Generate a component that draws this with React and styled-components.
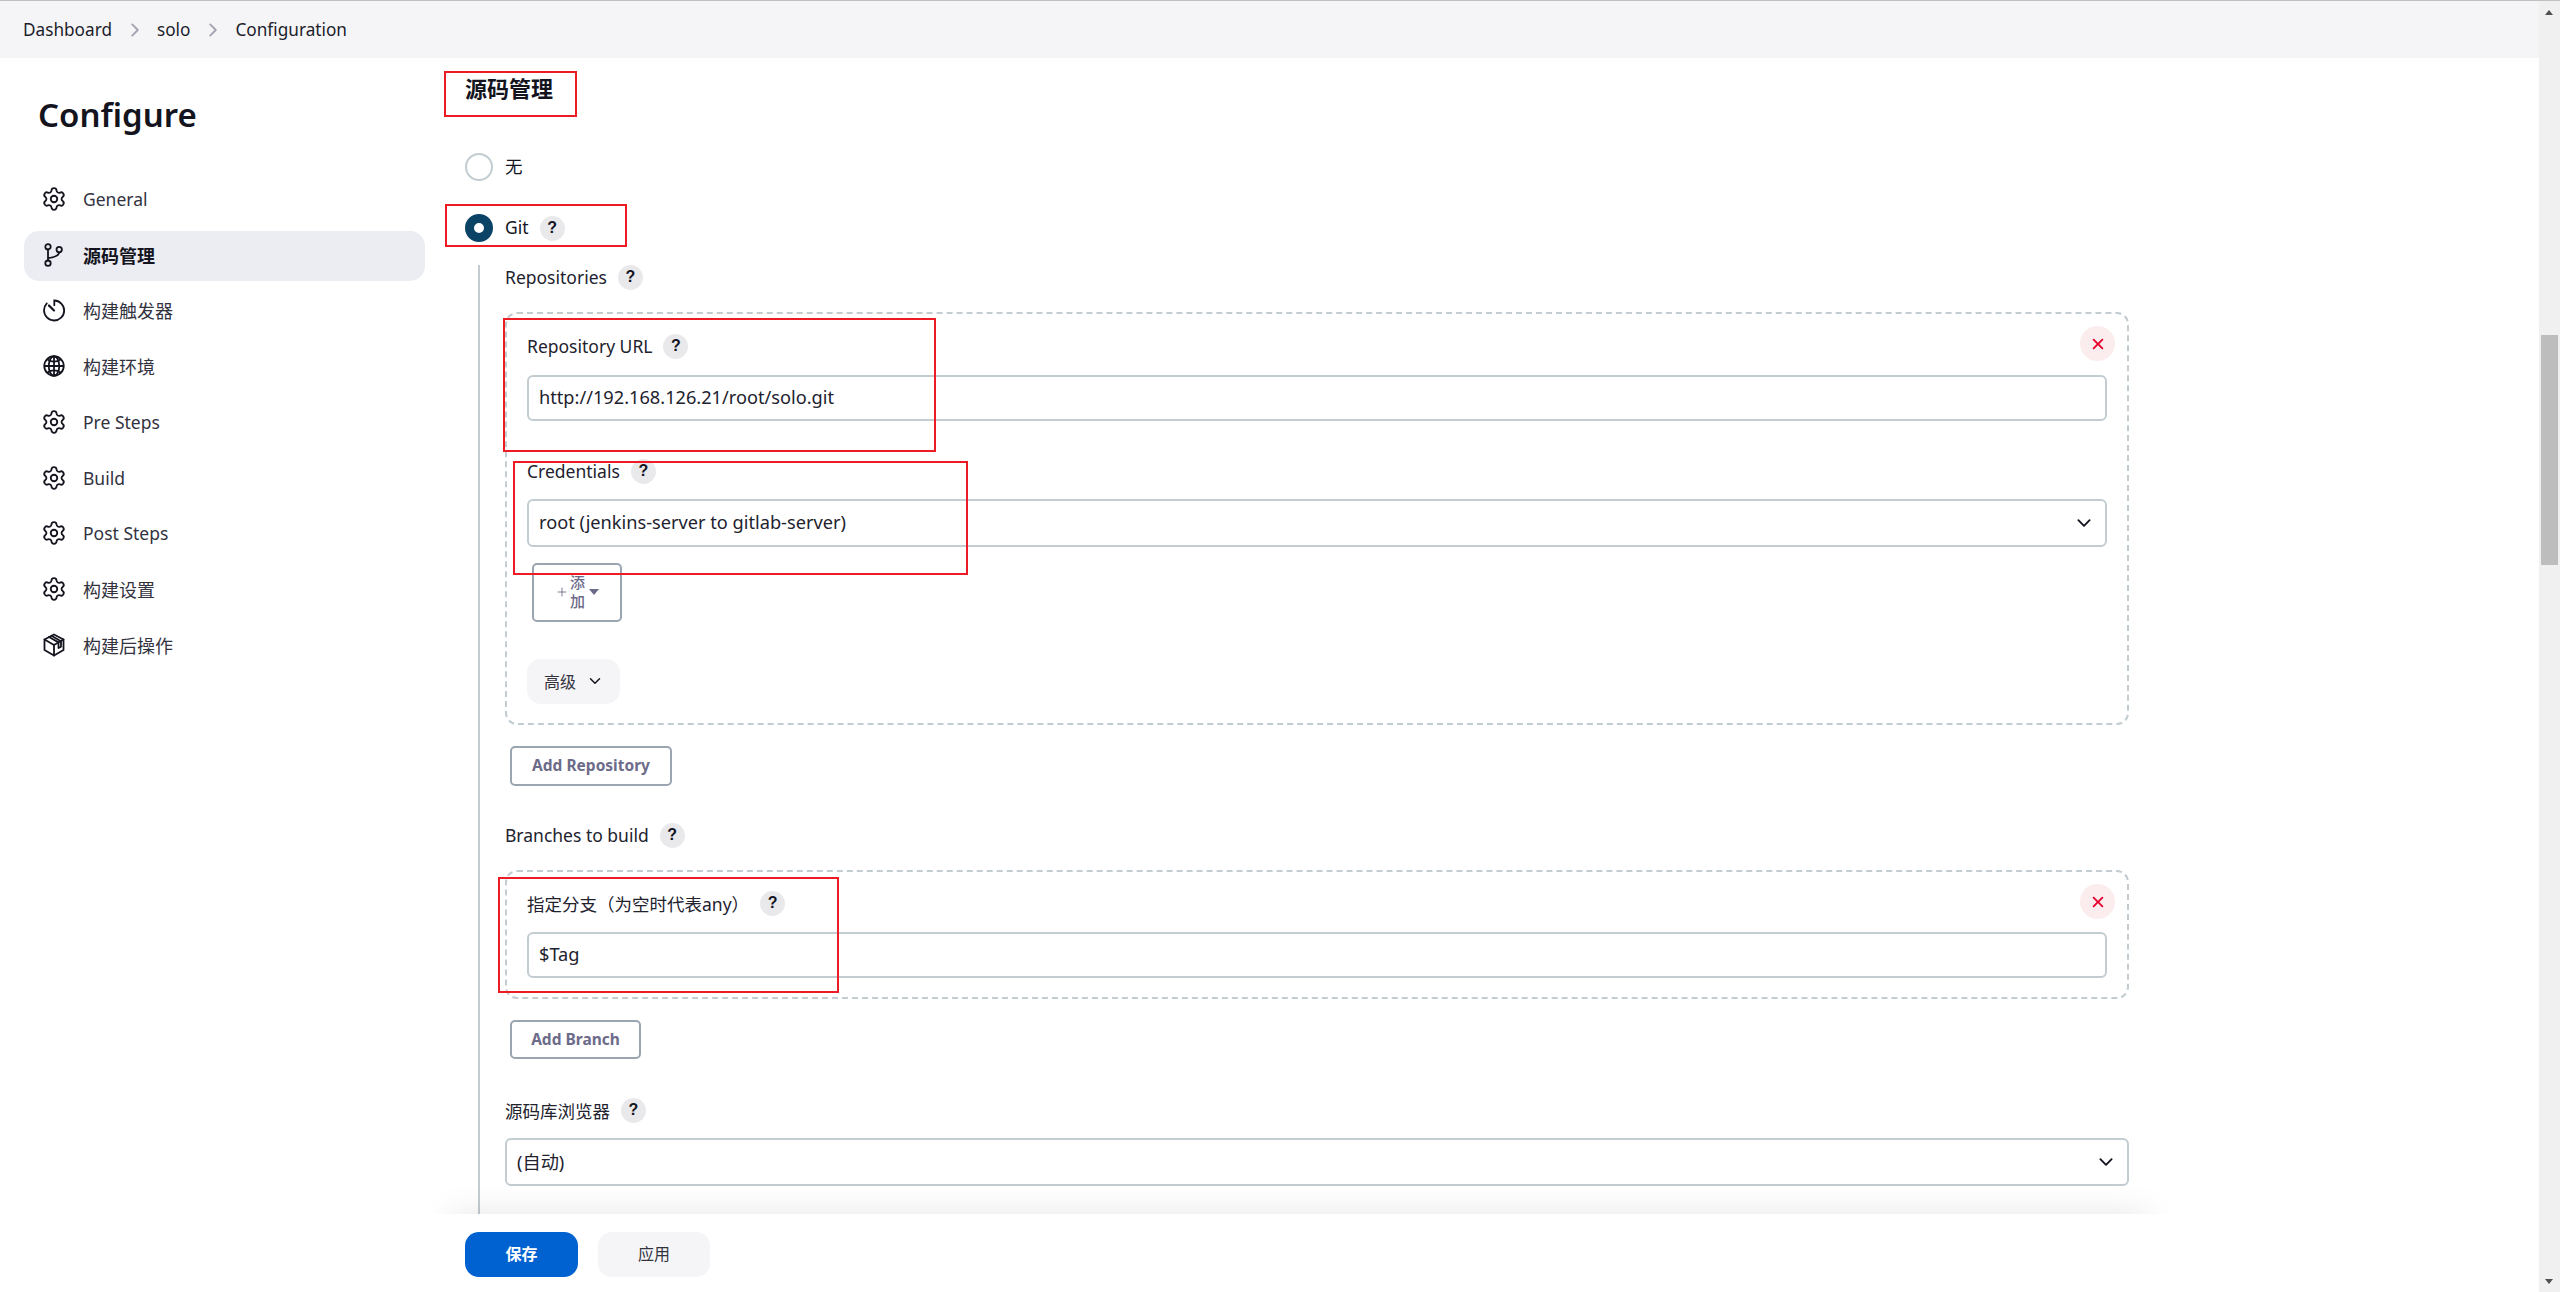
import React from 'react'
import styled, { createGlobalStyle, css } from 'styled-components'
import { Settings } from 'lucide-react'
import {
  IoGlobeOutline,
  IoChevronForward,
  IoChevronDown,
  IoClose,
  IoAdd
} from 'react-icons/io5'

const FONT = `"Noto Sans", "Noto Sans CJK SC", sans-serif`
const BORDER = '#c3ccd1'
const INK = '#14141f'
const MUTED_BTN = '#6d6b8a'

const GlobalStyle = createGlobalStyle`
  html, body {
    margin: 0;
    padding: 0;
    background: #fff;
    overflow: hidden;
  }
  * {
    box-sizing: border-box;
  }
  body {
    font-family: ${FONT};
    font-size: 17.5px;
    color: ${INK};
  }
`

const Screen = styled.div`
  display: grid;
  grid-template-columns: 1fr 21px;
  width: 2560px;
  height: 1292px;
  overflow: hidden;
`

const Page = styled.div`
  position: relative;
  display: flex;
  flex-direction: column;
  min-width: 0;
  overflow: hidden;
`

const Breadcrumbs = styled.nav`
  display: flex;
  align-items: center;
  flex: 0 0 58px;
  padding-left: 23px;
  background: #f5f5f7;
  border-top: 1px solid #c0c0c0;
  font-size: 17.2px;
  color: #1d1d2b;
`

const Crumb = styled.span`
  line-height: 1;
`

const CrumbArrow = styled(IoChevronForward)`
  width: 20px;
  height: 20px;
  margin: 1px 12px 0 13px;
  color: #a4a4b2;
`

const Body = styled.div`
  display: flex;
  flex: 1;
  min-height: 0;
`

const Sidebar = styled.aside`
  flex: 0 0 465px;
  padding: 34px 40px 0 24px;
`

const Title = styled.h1`
  margin: 0 0 37px 14px;
  font-size: 33px;
  line-height: 46px;
  font-weight: 600;
  color: ${INK};
`

const Menu = styled.ul`
  display: flex;
  flex-direction: column;
  gap: 6px;
  margin: 0;
  padding: 0;
  list-style: none;
`

const MenuItem = styled.li`
  display: flex;
  align-items: center;
  gap: 17px;
  height: 49.75px;
  padding: 0 0 2px 18px;
  border-radius: 15px;
  font-size: 17.5px;
  color: #33333f;
  ${p =>
    p.$active &&
    css`
      background: #ecedf2;
      font-weight: 700;
      color: ${INK};
    `}
  svg {
    flex: none;
    width: 24px;
    height: 24px;
    color: ${INK};
  }
`

const CjkText = styled.span`
  font-size: 18px;
`

const Main = styled.main`
  flex: 0 0 1664px;
  padding-top: 15px;
`

const Heading = styled.h2`
  margin: 0;
  font-size: 22px;
  line-height: 30px;
  font-weight: 700;
  color: ${INK};
`

const RadioRow = styled.label`
  display: flex;
  align-items: center;
  height: 28px;
  margin-top: ${p => p.$top}px;
`

const RadioMark = styled.span`
  flex: none;
  width: 28px;
  height: 28px;
  margin-right: 12px;
  border-radius: 50%;
  background: #fff;
  border: ${p => (p.$checked ? '9px solid #0b4367' : `2px solid ${BORDER}`)};
`

const RadioText = styled.span`
  margin-bottom: 3px;
`

const Section = styled.section`
  margin: 23px 0 0 13px;
  padding-left: 25px;
  padding-bottom: 200px;
  border-left: 2px solid ${BORDER};
`

const FieldLabel = styled.div`
  display: flex;
  align-items: center;
  height: 26px;
  margin-top: ${p => p.$top || 0}px;
  padding-bottom: 2px;
  color: #22222e;
`

const Help = styled.span`
  display: inline-flex;
  align-items: center;
  justify-content: center;
  flex: none;
  width: 25px;
  height: 25px;
  margin-left: ${p => p.$gap || 11}px;
  border-radius: 50%;
  background: #e9e9ec;
  font-family: "Liberation Sans", sans-serif;
  font-size: 16px;
  font-weight: 700;
  color: ${INK};
`

const Chunk = styled.div`
  position: relative;
  margin-top: 21px;
  padding: ${p => p.$pad}px 20px 19px;
  border: 2px dashed ${BORDER};
  border-radius: 12px;
`

const RemoveButton = styled.button`
  position: absolute;
  top: 12px;
  right: 12px;
  display: flex;
  align-items: center;
  justify-content: center;
  width: 35px;
  height: 35px;
  padding: 0;
  border: 0;
  border-radius: 50%;
  background: #fbecee;
  color: #e6002e;
  svg {
    width: 20px;
    height: 20px;
  }
`

const TextBox = styled.div`
  display: flex;
  align-items: center;
  justify-content: space-between;
  height: ${p => p.$height || 46}px;
  margin-top: ${p => p.$top || 0}px;
  padding: 0 10px 2px;
  border: 2px solid ${BORDER};
  border-radius: 6px;
  background: #fff;
  font-size: 18.2px;
  color: #22222e;
  svg {
    width: 20px;
    height: 20px;
    margin: 2px 1px 0 0;
    color: ${INK};
  }
`

const OutlineButton = styled.button`
  display: flex;
  align-items: center;
  justify-content: center;
  height: ${p => p.$height}px;
  width: ${p => p.$width}px;
  margin: ${p => p.$top}px 0 0 5px;
  padding: 0 0 2px;
  border: 2px solid #9aa5b1;
  border-radius: 5px;
  background: #fff;
  font-family: ${FONT};
  font-size: 15.5px;
  font-weight: 700;
  color: ${MUTED_BTN};
`

const AddMenuButton = styled(OutlineButton)`
  font-weight: 500;
  font-size: 15px;
  line-height: 19px;
  svg {
    flex: none;
    width: 14px;
    height: 14px;
  }
`

const AddLabel = styled.span`
  width: 15px;
  margin: 0 4px 0 1px;
  text-align: center;
`

const Caret = styled.span`
  flex: none;
  width: 0;
  height: 0;
  border-left: 5px solid transparent;
  border-right: 5px solid transparent;
  border-top: 6px solid ${MUTED_BTN};
`

const AdvancedButton = styled.button`
  display: flex;
  align-items: center;
  gap: 11px;
  width: 93px;
  height: 45px;
  margin-top: 37px;
  padding: 0 0 2px 17px;
  border: 0;
  border-radius: 14px;
  background: #f5f5f7;
  font-family: ${FONT};
  font-size: 16px;
  color: #33333f;
  svg {
    width: 16px;
    height: 16px;
    color: ${INK};
  }
`

const BottomBar = styled.div`
  position: absolute;
  left: 450px;
  right: 391px;
  bottom: 0;
  display: flex;
  align-items: flex-start;
  gap: 20px;
  height: 78px;
  padding: 18px 0 0 15px;
  background: #fff;
  &::before {
    content: '';
    position: absolute;
    inset: 0;
    box-shadow: 0 0 34px rgba(0, 0, 0, 0.1);
    clip-path: inset(-60px -60px 100% -60px);
  }
`

const SaveButton = styled.button`
  width: ${p => p.$width}px;
  height: 45px;
  padding: 0 0 3px;
  border: 0;
  border-radius: 14px;
  font-family: ${FONT};
  font-size: 16px;
  font-weight: ${p => (p.$primary ? 700 : 400)};
  color: ${p => (p.$primary ? '#fff' : '#33333f')};
  background: ${p => (p.$primary ? '#0062d1' : '#f5f5f7')};
`

// hand-drawn review marks on top of the form
const RedMark = styled.div`
  position: absolute;
  left: ${p => p.$x}px;
  top: ${p => p.$y}px;
  width: ${p => p.$w}px;
  height: ${p => p.$h}px;
  border: 2px solid #ed1c24;
  pointer-events: none;
`

const ScrollTrack = styled.div`
  position: relative;
  background: #f0f0f0;
  border-top: 1px solid #c0c0c0;
`

const ScrollThumb = styled.div`
  position: absolute;
  top: 334px;
  left: 2px;
  width: 17px;
  height: 230px;
  background: #bdbdbd;
`

const ScrollArrow = styled.div`
  position: absolute;
  left: 6px;
  ${p => (p.$down ? 'bottom: 8px;' : 'top: 9px;')}
  width: 0;
  height: 0;
  border-left: 4.5px solid transparent;
  border-right: 4.5px solid transparent;
  ${p => (p.$down ? 'border-top: 5px solid #505050;' : 'border-bottom: 5px solid #505050;')}
`

// the io5 outline is a touch thin at this size
const GlobeIcon = styled(IoGlobeOutline)`
  path,
  circle,
  line {
    stroke-width: 38px;
  }
`

const GearGlyph = styled(Settings)`
  && {
    width: 26px;
    height: 26px;
    margin: 0 -1px;
  }
`

function GearIcon() {
  return <GearGlyph strokeWidth={1.7} />
}

function BranchIcon() {
  return (
    <svg viewBox="0 0 24 24" fill="none" stroke="currentColor" strokeWidth="1.8" strokeLinecap="round">
      <circle cx="6" cy="3.8" r="2.7" />
      <circle cx="6" cy="20.2" r="2.7" />
      <circle cx="17.2" cy="6.6" r="2.7" />
      <path d="M6 6.5v11M17.2 9.3c0 3-3.6 4.8-11.2 5.9" />
    </svg>
  )
}

function TimerIcon() {
  return (
    <svg viewBox="0 0 24 24" fill="none" stroke="currentColor" strokeWidth="1.8" strokeLinecap="round">
      <path d="M4.8 5.4A10 10 0 0 0 2 12.3C2 17.8 6.5 22.5 12 22.5a10 10 0 0 0 .3-20v4.7" />
      <path d="M7 7.5l5 5" strokeWidth="2.2" />
    </svg>
  )
}

function PackageIcon() {
  return (
    <svg viewBox="0 0 24 24" fill="none" stroke="currentColor" strokeWidth="1.8" strokeLinejoin="round" strokeLinecap="round">
      <path d="M12 1.5 21.5 6.5V17L12 22.5 2.5 17V6.5Z" />
      <path d="M2.5 6.5 12 12l9.5-5.5M12 12v10.5" />
      <path d="M7 4l9.5 5.4V15l2.5-1.4V8.2L9.5 2.8" />
    </svg>
  )
}

const MENU = [
  { label: 'General', icon: GearIcon },
  { label: '源码管理', icon: BranchIcon, active: true, cjk: true },
  { label: '构建触发器', icon: TimerIcon, cjk: true },
  { label: '构建环境', icon: GlobeIcon, cjk: true },
  { label: 'Pre Steps', icon: GearIcon },
  { label: 'Build', icon: GearIcon },
  { label: 'Post Steps', icon: GearIcon },
  { label: '构建设置', icon: GearIcon, cjk: true },
  { label: '构建后操作', icon: PackageIcon, cjk: true }
]

const MARKS = [
  { x: 444, y: 71, w: 133, h: 46 },
  { x: 445, y: 204, w: 182, h: 43 },
  { x: 503, y: 318, w: 433, h: 134 },
  { x: 513, y: 461, w: 455, h: 114 },
  { x: 498, y: 877, w: 341, h: 116 }
]

export default function App() {
  return (
    <Screen>
      <GlobalStyle />
      <Page>
        <Breadcrumbs>
          <Crumb>Dashboard</Crumb>
          <CrumbArrow />
          <Crumb>solo</Crumb>
          <CrumbArrow />
          <Crumb>Configuration</Crumb>
        </Breadcrumbs>
        <Body>
          <Sidebar>
            <Title>Configure</Title>
            <Menu>
              {MENU.map(({ label, icon: Icon, active, cjk }) => (
                <MenuItem key={label} $active={active}>
                  <Icon />
                  {cjk ? <CjkText>{label}</CjkText> : label}
                </MenuItem>
              ))}
            </Menu>
          </Sidebar>
          <Main>
            <Heading>源码管理</Heading>
            <RadioRow $top={50}>
              <RadioMark />
              <RadioText>无</RadioText>
            </RadioRow>
            <RadioRow $top={33}>
              <RadioMark $checked />
              <RadioText>Git</RadioText>
              <Help>?</Help>
            </RadioRow>
            <Section>
              <FieldLabel>
                Repositories<Help>?</Help>
              </FieldLabel>
              <Chunk $pad={20}>
                <RemoveButton>
                  <IoClose />
                </RemoveButton>
                <FieldLabel>
                  Repository URL<Help>?</Help>
                </FieldLabel>
                <TextBox $top={15}>http://192.168.126.21/root/solo.git</TextBox>
                <FieldLabel $top={38}>
                  Credentials<Help>?</Help>
                </FieldLabel>
                <TextBox $top={14} $height={48}>
                  root (jenkins-server to gitlab-server)
                  <IoChevronDown />
                </TextBox>
                <AddMenuButton $top={16} $width={90} $height={59}>
                  <IoAdd />
                  <AddLabel>添加</AddLabel>
                  <Caret />
                </AddMenuButton>
                <AdvancedButton>
                  高级
                  <IoChevronDown />
                </AdvancedButton>
              </Chunk>
              <OutlineButton $top={21} $width={162} $height={40}>
                Add Repository
              </OutlineButton>
              <FieldLabel $top={37}>
                Branches to build<Help>?</Help>
              </FieldLabel>
              <Chunk $pad={19}>
                <RemoveButton>
                  <IoClose />
                </RemoveButton>
                <FieldLabel>
                  指定分支（为空时代表any）<Help $gap={11}>?</Help>
                </FieldLabel>
                <TextBox $top={15}>$Tag</TextBox>
              </Chunk>
              <OutlineButton $top={21} $width={131} $height={39}>
                Add Branch
              </OutlineButton>
              <FieldLabel $top={39}>
                源码库浏览器<Help>?</Help>
              </FieldLabel>
              <TextBox $top={14} $height={48}>
                (自动)
                <IoChevronDown />
              </TextBox>
            </Section>
          </Main>
        </Body>
        <BottomBar>
          <SaveButton $primary $width={113}>保存</SaveButton>
          <SaveButton $width={112}>应用</SaveButton>
        </BottomBar>
        {MARKS.map(m => (
          <RedMark key={m.x} $x={m.x} $y={m.y} $w={m.w} $h={m.h} />
        ))}
      </Page>
      <ScrollTrack>
        <ScrollArrow />
        <ScrollThumb />
        <ScrollArrow $down />
      </ScrollTrack>
    </Screen>
  )
}
